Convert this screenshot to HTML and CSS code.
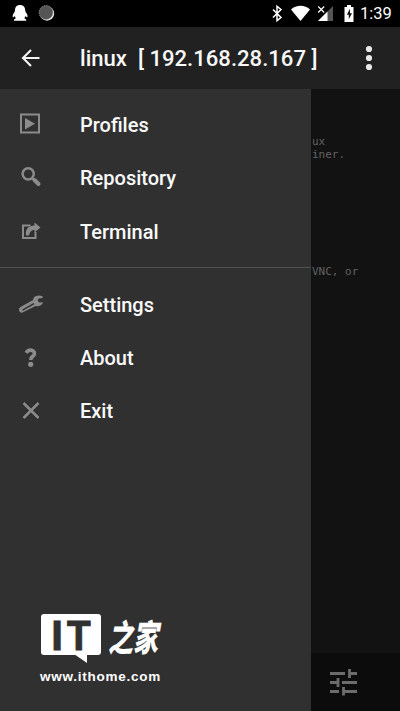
FILE: index.html
```html
<!DOCTYPE html>
<html lang="en">
<head>
<meta charset="utf-8">
<title>linux</title>
<link rel="stylesheet" href="styles.css">
</head>
<body>
<div class="screen">
  <div class="status">
    <svg class="notifications" width="60" height="27" viewBox="0 0 60 27">
      <path d="M20 5c-3.400 0-5 2.200-5 5.300 0 1.200-.6 1.700-1.300 3-.9 1.500-1.400 3-.9 3.900.5.4 1.300-.5 1.900-1.200.3 1 .7 1.600 1.200 2.200-1.400.6-2.200 1.200-2 2.600h12.400c.2-1.400-.6-2-2-2.600.5-.6.9-1.200 1.200-2.200.6.7 1.400 1.600 1.900 1.200.5-.9 0-2.400-.9-3.900-.7-1.300-1.300-1.800-1.300-3C25.200 7.200 23.400 5 20 5z" fill="#fff"/>
      <circle cx="47" cy="13.500" r="7.200" fill="#eee"/>
      <circle cx="46" cy="12.500" r="6.900" fill="#555" stroke="#888" stroke-dasharray="1.500 1"/>
    </svg>
    <svg class="signals" width="92" height="27" viewBox="0 0 92 27">
      <path d="M5 9.500l8 8-4 3.200V6.300l4 3.200-8 8" fill="none" stroke="#fff" stroke-width="1.500"/>
      <path d="M23 9.500c5.200-5 13.800-5 19 0L32.500 21z" fill="#fff"/>
      <path d="M65 6v15H50z" fill="#555"/>
      <path d="M59.500 11.500V21H50z" fill="#fff"/>
      <path d="M50.200 6.500l6 6M56.200 6.500l-6 6" stroke="#fff" stroke-width="1.200"/>
      <path d="M76.500 7H79V5h4v2h2.500v15h-9z" fill="#fff"/>
      <path d="M82 8.700l-3.200 6h2v4.600l3.200-6h-2z" fill="#111"/>
    </svg>
    <span class="clock">1:39</span>
  </div>
  <header class="toolbar">
    <svg class="back" width="20" height="20" viewBox="0 0 20 20"><path d="M18.500 10H2.500M10 2L2 10l8 8" fill="none" stroke="#f5f5f5" stroke-width="2.100"/></svg>
    <h1 class="title">linux&nbsp; [ 192.168.28.167 ]</h1>
    <svg class="more" width="8" height="26" viewBox="0 0 8 26"><g fill="#e8e8e8"><circle cx="4" cy="4" r="3.100"/><circle cx="4" cy="13" r="3.100"/><circle cx="4" cy="22" r="3.100"/></g></svg>
  </header>
  <div class="body">
    <nav class="drawer">
      <ul class="menu">
        <li class="item"><svg class="icon" viewBox="0 0 24 24"><path d="M3 1.500h18v18H3z" fill="none" stroke="#8b8b8b" stroke-width="2"/><path d="M7 5v11.500l10-5.700z" fill="#8b8b8b"/></svg><span>Profiles</span></li>
        <li class="item"><svg class="icon" viewBox="0 0 24 24"><circle cx="10.200" cy="7.800" r="5.600" fill="none" stroke="#8b8b8b" stroke-width="2.500"/><path d="M14.200 12l1.300 1.300" stroke="#8b8b8b" stroke-width="2.500"/><path d="M16.500 14l4 4" stroke="#8b8b8b" stroke-width="4" stroke-linecap="round"/></svg><span>Repository</span></li>
        <li class="item"><svg class="icon" viewBox="0 0 24 24"><path d="M12.500 5.500H5V18h12.500v-6" fill="none" stroke="#8b8b8b" stroke-width="2"/><path d="M8 15.500C7 9 10.500 5.500 16.500 5.500V2.500l6 5-6 5V10c-3.500 0-4.500 2-5.500 5.500z" fill="#8b8b8b"/></svg><span>Terminal</span></li>
      </ul>
      <ul class="menu menu-secondary">
        <li class="item"><svg class="icon" viewBox="0 0 24 24"><path d="M24.500 3.300c-3-1.600-7-1-8.700 1.500-.4.700-.6 1.400-.7 2.200L2.500 14c-2.700 1.600-1.600 6.200 2 5.600L17.500 13c2.800 1 6.600-.4 7.600-3.700l-4 .2-1.500-2.300 1.100-1.800 4-.3z" fill="#8b8b8b"/><path d="M5 16.800L15.500 10.800" stroke="#303030" stroke-width="1.500" stroke-linecap="round"/></svg><span>Settings</span></li>
        <li class="item"><svg class="icon" viewBox="0 0 24 24"><path d="M8.200 6.800C9.500 4.500 11.500 3.700 13.700 4.200c3 .7 3.600 4 1.600 5.700-1.700 1.300-2.500 1.500-2.500 4" fill="none" stroke="#8b8b8b" stroke-width="3.700"/><circle cx="12.700" cy="18.300" r="2.600" fill="#8b8b8b"/></svg><span>About</span></li>
        <li class="item"><svg class="icon" viewBox="0 0 24 24"><path d="M5.500 4l15 15M20.500 4l-15 15" stroke="#8b8b8b" stroke-width="2.500"/></svg><span>Exit</span></li>
      </ul>
      <div class="brand">
        <div class="brand-row">
          <div class="bubble"><span class="it"><span class="it-i">I</span><span class="it-t">T</span></span></div>
          <span class="home" lang="zh">之家</span>
        </div>
        <span class="site">www.ithome.com</span>
      </div>
    </nav>
    <main class="console">
      <pre class="log">ux
iner.








VNC, or</pre>
      <footer class="bottom">
        <svg width="28" height="28" viewBox="0 0 28 28"><path d="M0 5.500h15M20 5.500h7M19.500 1v9M0 14.500h7M12 14.500h15M8 10v9M0 23.500h9M14 23.500h13M13.500 19v8.500" fill="none" stroke="#6c6c6c" stroke-width="2.800"/></svg>
      </footer>
    </main>
  </div>
</div>
</body>
</html>
```

FILE: styles.css
```css
* { box-sizing: border-box; }
body { margin: 0; background: #121212; font-family: Roboto, sans-serif; }
.screen { display: flex; flex-direction: column; width: 400px; height: 711px; overflow: hidden; }
.status { display: flex; align-items: center; height: 27px; background: #000; color: #fff; }
.signals { margin-left: 208px; }
.clock { padding-top: 1px; font-size: 16.500px; line-height: 26px; white-space: nowrap; }
.toolbar { display: flex; align-items: center; height: 62px; background: #212121; color: #f8f8f8; }
.back { margin-left: 21px; flex: none; }
.title { width: 240px; margin: 0 0 0 39px; font-size: 22.100px; font-weight: 500; line-height: 30px; white-space: nowrap; }
.more { margin-left: 45px; }
.body { display: flex; flex: 1; min-height: 0; }
.drawer { display: flex; flex-direction: column; width: 311px; background: #303030; color: #fafafa; }
.menu { margin: 0; padding: 9.400px 0 8.600px; list-style: none; }
.menu-secondary { padding-top: 10px; border-top: 1px solid #505050; }
.item { display: flex; align-items: center; height: 53.330px; font-size: 20px; font-weight: 500; }
.icon { width: 24px; height: 24px; margin: 0 38px 0 18px; overflow: visible; }
.brand { margin: auto 0 25px 40px; color: #fff; }
.brand-row { display: flex; align-items: flex-start; height: 50px; }
.bubble { position: relative; display: flex; justify-content: center; width: 60px; height: 41px; margin-left: 1px; border-radius: 3px; background: #fff; }
.bubble::after { content: ""; position: absolute; left: 33px; top: 40px; border-top: 9px solid #fff; border-left: 13px solid transparent; }
.it { display: flex; gap: 4px; color: #303030; font: bold 42px/43px "Liberation Sans", sans-serif; -webkit-text-stroke: 1px #303030; }
.it-i { width: 10px; margin-left: 2px; text-indent: -1px; }
.it-t { transform: scaleX(.92); }
.home { margin: 1px 0 0 7px; font: italic 900 25px/40px "Noto Sans CJK SC", sans-serif; white-space: nowrap; transform: scaleY(1.450); }
.site { display: block; margin-top: 4px; font: bold 13.500px/18px "Liberation Sans", sans-serif; letter-spacing: .75px; white-space: nowrap; }
.console { display: flex; flex: 1; flex-direction: column; justify-content: space-between; background: #121212; }
.log { margin: 46px 0 0 1px; color: #626262; font: 11px/13px "DejaVu Sans Mono", monospace; }
.bottom { display: flex; align-items: center; height: 58px; padding-left: 19px; background: #0c0c0c; }
```
